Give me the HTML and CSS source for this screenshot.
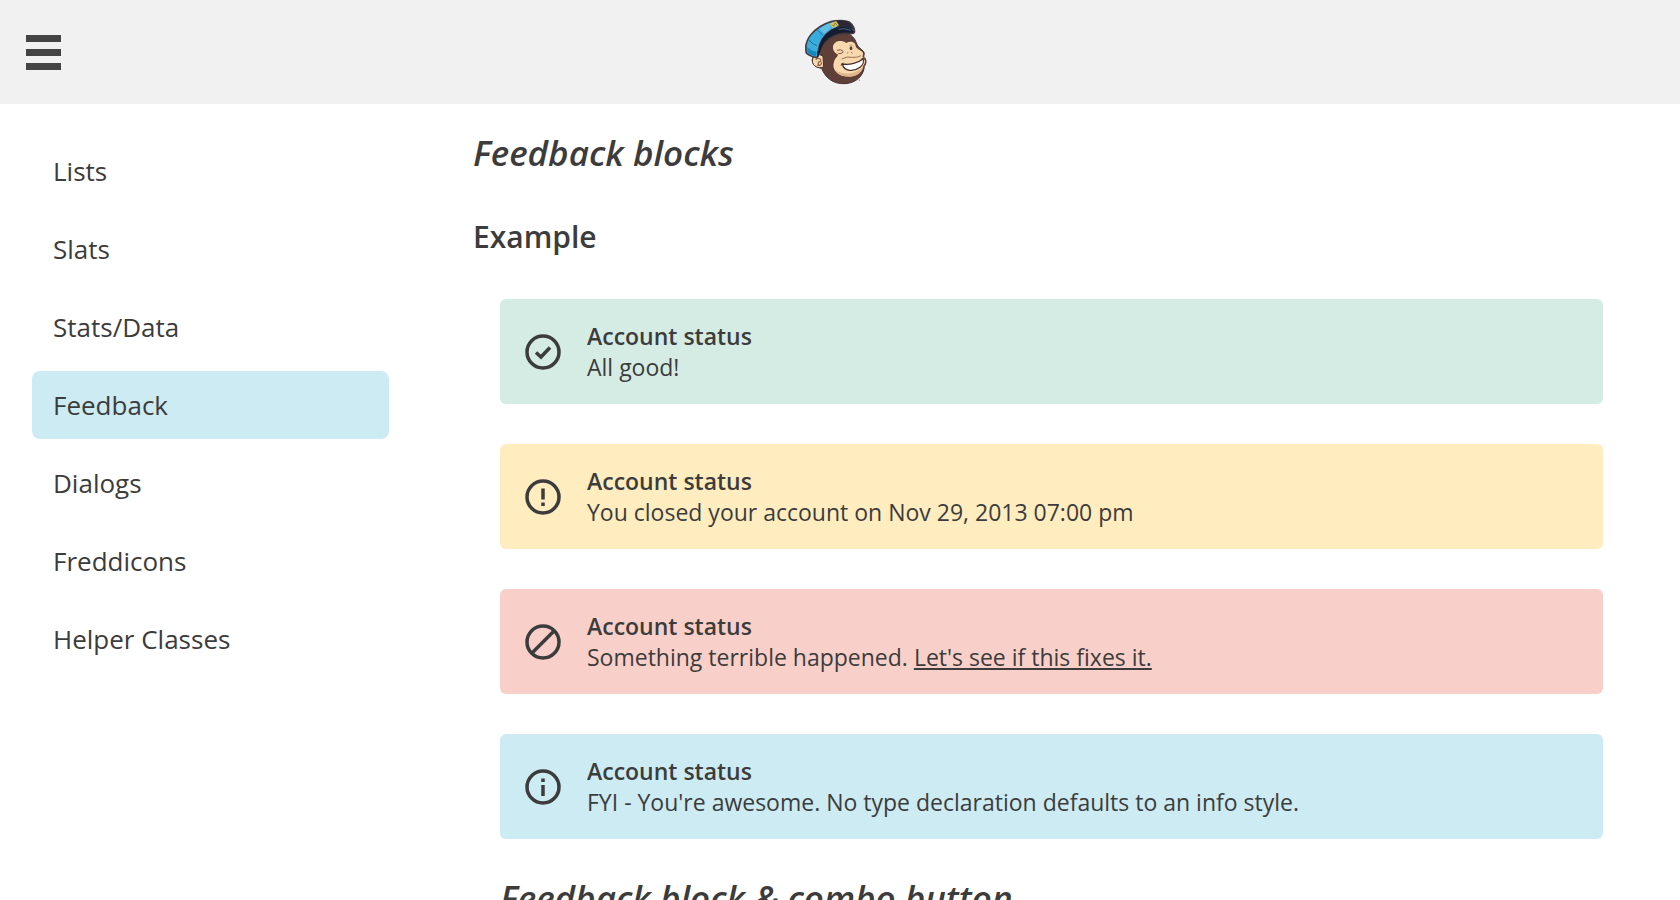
FILE: index.html
```html
<!DOCTYPE html>
<html lang="en">
<head>
  <meta charset="UTF-8">
  <meta name="viewport" content="width=device-width, initial-scale=1.0">
  <title>Feedback blocks</title>
  <link rel="stylesheet" href="styles.css">
</head>
<body>
  <header class="header">
    <button class="menu-button" type="button" aria-label="Menu">
      <span class="menu-bar"></span>
      <span class="menu-bar"></span>
      <span class="menu-bar"></span>
    </button>
    <a class="logo" href="#" aria-label="Home">
      <svg width="70" height="66" viewBox="30 30 210 198">
        <!-- head -->
        <path d="M76 110 C90 80 130 64 158 74 C174 80 180 90 184 102 C188 116 200 120 206 128 C210 134 206 140 206 144 C216 150 214 164 208 172 C206 200 184 222 150 224 C112 226 90 204 80 178 C62 176 50 164 52 150 C56 136 70 134 76 140 Z" fill="#5f4039" stroke="#4a302d" stroke-width="3"/>
        <!-- face -->
        <path d="M114 118 C112 98 136 90 154 102 C166 94 182 98 182 112 C186 122 198 124 203 130 C206 136 202 140 203 144 C212 150 212 162 205 170 C202 194 178 206 150 202 C124 198 110 178 117 158 C121 146 130 142 128 136 C119 132 115 126 114 118 Z" fill="#f8d9ae"/>
        <path d="M122 184 C145 199 180 198 203 175 C196 200 172 206 150 202 C136 200 126 193 122 184 Z" fill="#e2b489"/>
        <!-- ear -->
        <path d="M84 142 C68 130 52 140 52 156 C53 172 70 180 86 174 Z" fill="#f8d9ae" stroke="#4a302d" stroke-width="3"/>
        <path d="M62 153 C68 144 80 150 77 157 C70 157 67 162 72 168 M66 168 C76 172 81 166 79 160" fill="none" stroke="#9a6550" stroke-width="4"/>
        <!-- eyes and nose -->
        <path d="M126 124 Q136 119 145 127 M130 134 Q139 135 145 129" fill="none" stroke="#7e5545" stroke-width="3"/>
        <ellipse cx="168" cy="118" rx="4" ry="6" fill="#5b3d35"/>
        <path d="M162 109 Q169 105 175 111" fill="none" stroke="#b98b67" stroke-width="2"/>
        <path d="M156 133 L160 130 M168 130 L173 133 M140 150 Q157 141 172 145 Q186 147 198 140" fill="none" stroke="#a0705a" stroke-width="3"/>
        <!-- smile -->
        <path d="M142 165 C164 169 190 162 204 149 C208 158 203 169 195 175 C177 189 147 188 142 165 Z" fill="#fff" stroke="#4a302d" stroke-width="4"/>
        <path d="M138 170 Q139 164 145 162 M200 148 Q206 147 209 152" fill="none" stroke="#4a302d" stroke-width="3"/>
        <circle cx="193" cy="213" r="1.5" fill="#4a302d"/>
        <!-- cap -->
        <path d="M34 132 C29 110 36 92 47 78 C62 59 86 45 108 38 C125 33 150 33 164 40 C174 47 180 61 178 70 C176 77 163 73 150 73 C124 74 98 88 84 108 C76 120 72 134 66 146 C54 144 42 140 34 132 Z" fill="#3eaddd" stroke="#4a3c43" stroke-width="5"/>
        <path d="M36 113 Q47 125 65 128 L62 142 Q47 140 37 131 Z" fill="#1688bf"/>
        <path d="M42 90 Q48 78 64 66 L82 82 Q70 94 65 108 Q51 102 42 90 Z" fill="#36acdf"/>
        <path d="M73 60 Q88 49 104 42 L106 58 L88 74 Z" fill="#63bfe6"/>
        <path d="M41 92 Q50 105 66 110 M67 63 L84 79" fill="none" stroke="#1d719e" stroke-width="3"/>
        <path d="M68 144 C66 104 86 72 119 58 C143 49 166 53 176 68 C169 74 157 70 144 71 C116 74 96 87 83 107 C76 118 74 132 68 144 Z" fill="#151b30" stroke="#20202c" stroke-width="3"/>
        <path d="M122 36 Q145 32 161 39 Q171 45 176 64 Q158 50 128 54 Z" fill="#2b2734"/>
        <path d="M68 126 Q70 88 105 62 M130 61 Q150 56 168 64" fill="none" stroke="#6988a1" stroke-width="2"/>
        <path d="M104 44 L124 37 L132 49 L113 57 Z" fill="#ddc55c"/>
        <path d="M110 47 L116 52 L120 42 L127 49" fill="none" stroke="#665a2d" stroke-width="2"/>
      </svg>
    </a>
  </header>

  <div class="page">
    <nav class="sidebar">
      <a class="nav-link" href="#">Lists</a>
      <a class="nav-link" href="#">Slats</a>
      <a class="nav-link" href="#">Stats/Data</a>
      <a class="nav-link active" href="#" aria-current="page">Feedback</a>
      <a class="nav-link" href="#">Dialogs</a>
      <a class="nav-link" href="#">Freddicons</a>
      <a class="nav-link" href="#">Helper Classes</a>
    </nav>

    <main class="content">
      <h1 class="title">Feedback blocks</h1>
      <h2 class="subtitle">Example</h2>

      <div class="examples">
        <div class="feedback success">
          <svg class="icon" viewBox="0 0 36 36">
            <circle cx="18" cy="18" r="16"/>
            <path d="M11 18.5 L16 23 L25 13.5"/>
          </svg>
          <div>
            <h3 class="feedback-title">Account status</h3>
            <p class="feedback-text">All good!</p>
          </div>
        </div>

        <div class="feedback warning">
          <svg class="icon" viewBox="0 0 36 36">
            <circle cx="18" cy="18" r="16"/>
            <path d="M18 9.5 V20.5 M18 23.5 V27"/>
          </svg>
          <div>
            <h3 class="feedback-title">Account status</h3>
            <p class="feedback-text">You closed your account on Nov 29, 2013 07:00 pm</p>
          </div>
        </div>

        <div class="feedback error">
          <svg class="icon" viewBox="0 0 36 36">
            <circle cx="18" cy="18" r="16"/>
            <path d="M29 7 L7 29"/>
          </svg>
          <div>
            <h3 class="feedback-title">Account status</h3>
            <p class="feedback-text">Something terrible happened. <a href="#">Let's see if this fixes it.</a></p>
          </div>
        </div>

        <div class="feedback info">
          <svg class="icon" viewBox="0 0 36 36">
            <circle cx="18" cy="18" r="16"/>
            <path d="M18 9.5 V13 M18 16 V27"/>
          </svg>
          <div>
            <h3 class="feedback-title">Account status</h3>
            <p class="feedback-text">FYI - You're awesome. No type declaration defaults to an info style.</p>
          </div>
        </div>
      </div>

      <h1 class="title next-title">Feedback block &amp; combo button</h1>
    </main>
  </div>
</body>
</html>
```
FILE: styles.css
```css
* {
  box-sizing: border-box;
}

body {
  margin: 0;
  font-family: "Open Sans", sans-serif;
  color: #3c3c3c;
  background-color: #fff;
  height: 100vh;
  overflow: hidden;
}

h1, h2, h3, p {
  margin: 0;
}

.header {
  display: grid;
  grid-template-columns: 1fr auto 1fr;
  align-items: center;
  height: 104px;
  padding: 0 26px;
  background-color: #f1f1f1;
}

.menu-button {
  display: flex;
  flex-direction: column;
  gap: 7px;
  width: 35px;
  padding: 0;
  border: none;
  background: none;
  cursor: pointer;
}

.menu-bar {
  width: 100%;
  height: 7px;
  background-color: #444;
}

.logo {
  display: flex;
}

.page {
  display: grid;
  grid-template-columns: 25% 1fr;
}

.sidebar {
  display: flex;
  flex-direction: column;
  gap: 10px;
  padding: 33px 31px 33px 32px;
}

.nav-link {
  padding: 16px 21px;
  border-radius: 8px;
  font-size: 26px;
  line-height: 36px;
  color: #3c3c3c;
  text-decoration: none;
}

.nav-link.active {
  background-color: #cdebf2;
}

.content {
  padding: 24px 77px 0 53px;
}

.title {
  font-size: 35px;
  font-style: italic;
  font-weight: 600;
  line-height: 50px;
}

.subtitle {
  margin-top: 38px;
  font-size: 30px;
  font-weight: 600;
  line-height: 42px;
}

.examples {
  display: flex;
  flex-direction: column;
  gap: 40px;
  margin-top: 41px;
  padding-left: 27px;
}

.next-title {
  margin-top: 34px;
  padding-left: 27px;
}

.feedback {
  display: flex;
  align-items: center;
  gap: 26px;
  padding: 21px 25px;
  border-radius: 6px;
}

.success {
  background-color: #d5ece5;
}

.warning {
  background-color: #ffedc0;
}

.error {
  background-color: #f8d0c9;
}

.info {
  background-color: #cdebf2;
}

.icon {
  flex: none;
  width: 36px;
  height: 36px;
  fill: none;
  stroke: #3c3c3c;
  stroke-width: 3.5;
}

.feedback-title {
  font-size: 23px;
  font-weight: 600;
  line-height: 32px;
}

.feedback-text {
  font-size: 23px;
  line-height: 31px;
}

.feedback-text a {
  color: inherit;
}
```
